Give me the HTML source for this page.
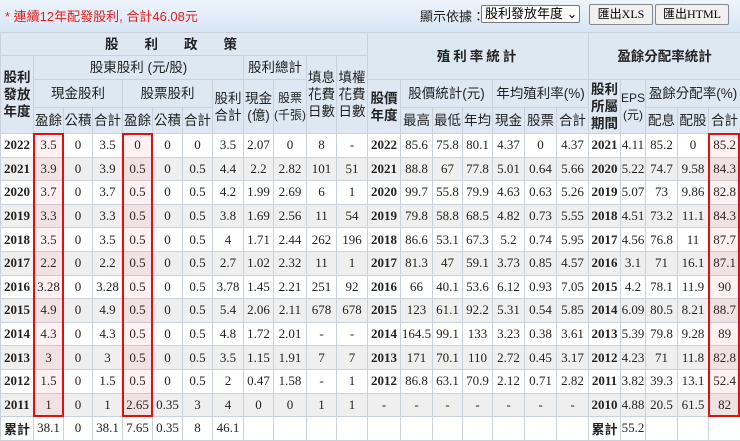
<!DOCTYPE html>
<html><head><meta charset="utf-8"><style>
body{margin:0;width:740px;height:440px;overflow:hidden;background:#fff;font-family:"Liberation Serif","Noto Serif CJK SC",serif;position:relative}
.top{position:absolute;left:0;top:0;width:740px;height:32px;background:linear-gradient(#eef4fb,#d7e5f4);}
.t1{position:absolute;left:5px;top:6px;color:#e0201c;font-size:13px;font-family:"Liberation Sans","Noto Sans CJK TC",sans-serif}
.t2{position:absolute;left:420px;top:6px;font-size:13px;color:#222;font-family:"Liberation Sans","Noto Sans CJK TC",sans-serif}
.sel{position:absolute;left:481px;top:5px;width:94px;height:16px;border:1px solid #777;border-radius:2px;background:#fff;font-size:13px;line-height:16px;padding-left:3px;box-sizing:content-box;font-family:"Liberation Sans","Noto Sans CJK TC",sans-serif}
.btn{position:absolute;top:4px;height:19px;border:1px solid #888;border-radius:2px;background:#f0f0f0;font-size:12px;line-height:19px;text-align:center;font-family:"Liberation Serif","Noto Sans CJK TC",serif}
table{position:absolute;left:0;top:32px;border-collapse:collapse;table-layout:fixed;width:740px}
td,th{border:1px solid #c9d2db;padding:0;text-align:center;font-size:13px;overflow:hidden;white-space:nowrap;color:#222}
th{background:#dde8f3;font-weight:normal;font-family:"Liberation Sans","Noto Sans CJK TC",sans-serif;font-size:13.5px;line-height:17px}
th.b{font-weight:bold}
tr.d td{height:22.6px}
tr.g td{background:#efefef}
td.y{font-weight:bold}
.box{position:absolute;border:2px solid #e01010;background:rgba(255,60,60,0.07);box-sizing:border-box}
</style></head><body>
<div class="top"></div>
<div class="t1">* 連續12年配發股利, 合計46.08元</div>
<div class="t2">顯示依據：</div>
<div class="sel">股利發放年度 ⌄</div>
<div class="btn" style="left:589px;width:62px">匯出XLS</div>
<div class="btn" style="left:655px;width:72px">匯出HTML</div>
<table>
<colgroup><col style="width:33px"><col style="width:30px"><col style="width:29px"><col style="width:30px"><col style="width:30px"><col style="width:30px"><col style="width:30px"><col style="width:31px"><col style="width:30px"><col style="width:33px"><col style="width:30px"><col style="width:31px"><col style="width:33px"><col style="width:32px"><col style="width:30px"><col style="width:30px"><col style="width:32px"><col style="width:32px"><col style="width:32px"><col style="width:32px"><col style="width:25px"><col style="width:32px"><col style="width:31px"><col style="width:32px"></colgroup>
<tr style="height:23px"><th colspan="12" class="b" style="letter-spacing:26px">股利政策</th><th colspan="7" rowspan="2" class="b" style="letter-spacing:3px">殖利率統計</th><th colspan="5" rowspan="2" class="b">盈餘分配率統計</th></tr>
<tr style="height:24px"><th rowspan="3" class="b">股利<br>發放<br>年度</th><th colspan="7">股東股利 (元/股)</th><th colspan="2">股利總計</th><th rowspan="3">填息<br>花費<br>日數</th><th rowspan="3">填權<br>花費<br>日數</th></tr>
<tr style="height:28px"><th colspan="3">現金股利</th><th colspan="3">股票股利</th><th rowspan="2">股利<br>合計</th><th rowspan="2">現金<br>(億)</th><th rowspan="2" style="font-size:12px">股票<br>(千張)</th><th rowspan="2" class="b">股價<br>年度</th><th colspan="3">股價統計(元)</th><th colspan="3">年均殖利率(%)</th><th rowspan="2" class="b">股利<br>所屬<br>期間</th><th rowspan="2" style="font-size:12px">EPS<br>(元)</th><th colspan="3">盈餘分配率(%)</th></tr>
<tr style="height:26px"><th>盈餘</th><th>公積</th><th>合計</th><th>盈餘</th><th>公積</th><th>合計</th><th>最高</th><th>最低</th><th>年均</th><th>現金</th><th>股票</th><th>合計</th><th>配息</th><th>配股</th><th>合計</th></tr>
<tr class="d"><td class="y">2022</td><td>3.5</td><td>0</td><td>3.5</td><td>0</td><td>0</td><td>0</td><td>3.5</td><td>2.07</td><td>0</td><td>8</td><td>-</td><td class="y">2022</td><td>85.6</td><td>75.8</td><td>80.1</td><td>4.37</td><td>0</td><td>4.37</td><td class="y">2021</td><td>4.11</td><td>85.2</td><td>0</td><td>85.2</td></tr>
<tr class="d g"><td class="y">2021</td><td>3.9</td><td>0</td><td>3.9</td><td>0.5</td><td>0</td><td>0.5</td><td>4.4</td><td>2.2</td><td>2.82</td><td>101</td><td>51</td><td class="y">2021</td><td>88.8</td><td>67</td><td>77.8</td><td>5.01</td><td>0.64</td><td>5.66</td><td class="y">2020</td><td>5.22</td><td>74.7</td><td>9.58</td><td>84.3</td></tr>
<tr class="d"><td class="y">2020</td><td>3.7</td><td>0</td><td>3.7</td><td>0.5</td><td>0</td><td>0.5</td><td>4.2</td><td>1.99</td><td>2.69</td><td>6</td><td>1</td><td class="y">2020</td><td>99.7</td><td>55.8</td><td>79.9</td><td>4.63</td><td>0.63</td><td>5.26</td><td class="y">2019</td><td>5.07</td><td>73</td><td>9.86</td><td>82.8</td></tr>
<tr class="d g"><td class="y">2019</td><td>3.3</td><td>0</td><td>3.3</td><td>0.5</td><td>0</td><td>0.5</td><td>3.8</td><td>1.69</td><td>2.56</td><td>11</td><td>54</td><td class="y">2019</td><td>79.8</td><td>58.8</td><td>68.5</td><td>4.82</td><td>0.73</td><td>5.55</td><td class="y">2018</td><td>4.51</td><td>73.2</td><td>11.1</td><td>84.3</td></tr>
<tr class="d"><td class="y">2018</td><td>3.5</td><td>0</td><td>3.5</td><td>0.5</td><td>0</td><td>0.5</td><td>4</td><td>1.71</td><td>2.44</td><td>262</td><td>196</td><td class="y">2018</td><td>86.6</td><td>53.1</td><td>67.3</td><td>5.2</td><td>0.74</td><td>5.95</td><td class="y">2017</td><td>4.56</td><td>76.8</td><td>11</td><td>87.7</td></tr>
<tr class="d g"><td class="y">2017</td><td>2.2</td><td>0</td><td>2.2</td><td>0.5</td><td>0</td><td>0.5</td><td>2.7</td><td>1.02</td><td>2.32</td><td>11</td><td>1</td><td class="y">2017</td><td>81.3</td><td>47</td><td>59.1</td><td>3.73</td><td>0.85</td><td>4.57</td><td class="y">2016</td><td>3.1</td><td>71</td><td>16.1</td><td>87.1</td></tr>
<tr class="d"><td class="y">2016</td><td>3.28</td><td>0</td><td>3.28</td><td>0.5</td><td>0</td><td>0.5</td><td>3.78</td><td>1.45</td><td>2.21</td><td>251</td><td>92</td><td class="y">2016</td><td>66</td><td>40.1</td><td>53.6</td><td>6.12</td><td>0.93</td><td>7.05</td><td class="y">2015</td><td>4.2</td><td>78.1</td><td>11.9</td><td>90</td></tr>
<tr class="d g"><td class="y">2015</td><td>4.9</td><td>0</td><td>4.9</td><td>0.5</td><td>0</td><td>0.5</td><td>5.4</td><td>2.06</td><td>2.11</td><td>678</td><td>678</td><td class="y">2015</td><td>123</td><td>61.1</td><td>92.2</td><td>5.31</td><td>0.54</td><td>5.85</td><td class="y">2014</td><td>6.09</td><td>80.5</td><td>8.21</td><td>88.7</td></tr>
<tr class="d"><td class="y">2014</td><td>4.3</td><td>0</td><td>4.3</td><td>0.5</td><td>0</td><td>0.5</td><td>4.8</td><td>1.72</td><td>2.01</td><td>-</td><td>-</td><td class="y">2014</td><td>164.5</td><td>99.1</td><td>133</td><td>3.23</td><td>0.38</td><td>3.61</td><td class="y">2013</td><td>5.39</td><td>79.8</td><td>9.28</td><td>89</td></tr>
<tr class="d g"><td class="y">2013</td><td>3</td><td>0</td><td>3</td><td>0.5</td><td>0</td><td>0.5</td><td>3.5</td><td>1.15</td><td>1.91</td><td>7</td><td>7</td><td class="y">2013</td><td>171</td><td>70.1</td><td>110</td><td>2.72</td><td>0.45</td><td>3.17</td><td class="y">2012</td><td>4.23</td><td>71</td><td>11.8</td><td>82.8</td></tr>
<tr class="d"><td class="y">2012</td><td>1.5</td><td>0</td><td>1.5</td><td>0.5</td><td>0</td><td>0.5</td><td>2</td><td>0.47</td><td>1.58</td><td>-</td><td>1</td><td class="y">2012</td><td>86.8</td><td>63.1</td><td>70.9</td><td>2.12</td><td>0.71</td><td>2.82</td><td class="y">2011</td><td>3.82</td><td>39.3</td><td>13.1</td><td>52.4</td></tr>
<tr class="d g"><td class="y">2011</td><td>1</td><td>0</td><td>1</td><td>2.65</td><td>0.35</td><td>3</td><td>4</td><td>0</td><td>0</td><td>1</td><td>1</td><td>-</td><td>-</td><td>-</td><td>-</td><td>-</td><td>-</td><td>-</td><td class="y">2010</td><td>4.88</td><td>20.5</td><td>61.5</td><td>82</td></tr>
<tr class="d"><td class="y" style="font-family:'Liberation Sans','Noto Sans CJK TC',sans-serif">累計</td><td>38.1</td><td>0</td><td>38.1</td><td>7.65</td><td>0.35</td><td>8</td><td>46.1</td><td></td><td></td><td></td><td></td><td></td><td></td><td></td><td></td><td></td><td></td><td></td><td class="y" style="font-family:'Liberation Sans','Noto Sans CJK TC',sans-serif">累計</td><td>55.2</td><td></td><td></td><td></td></tr>
</table>
<div class="box" style="left:33px;top:133px;width:31px;height:284px"></div>
<div class="box" style="left:122px;top:133px;width:31px;height:284px"></div>
<div class="box" style="left:708px;top:133px;width:32px;height:284px"></div>
</body></html>
